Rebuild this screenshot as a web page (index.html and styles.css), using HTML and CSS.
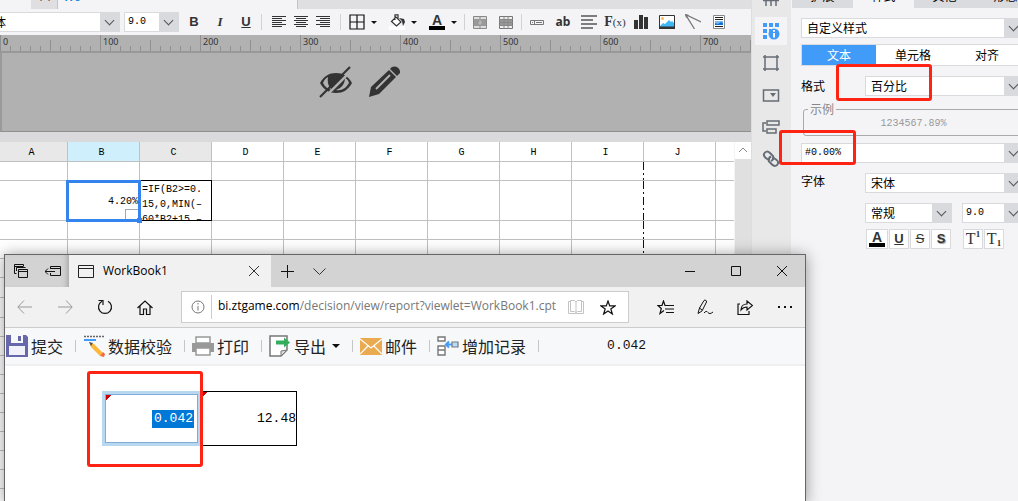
FILE: index.html
```html
<!DOCTYPE html>
<html lang="zh-CN">
<head>
<meta charset="utf-8">
<title>WorkBook1</title>
<link rel="stylesheet" href="styles.css">
</head>
<body>
<div class="app">
  <main class="designer">
    <div class="doc-tabs">
      <div class="doc-tabs-open"><span class="doc-tool">口</span><span class="doc-name">Wo</span></div>
    </div>
    <div class="toolbar">
      <label class="combo combo-font"><select aria-label="字体"><option>宋体</option></select></label>
      <label class="combo combo-size"><select class="mono" aria-label="字号"><option>9.0</option></select></label>
      <div class="group">
        <button class="tb letter bold" aria-label="加粗">B</button>
        <button class="tb letter italic" aria-label="斜体">I</button>
        <button class="tb letter under" aria-label="下划线">U</button>
      </div>
      <i class="sep"></i>
      <div class="group group-align">
        <button class="tb narrow" aria-label="左对齐"><svg width="14" height="12" viewBox="0 0 14 12"><path d="M0 .5h14M0 2.5h10M0 4.5h14M0 6.5h10M0 8.5h14M0 10.5h10" stroke="#333"/></svg></button>
        <button class="tb narrow" aria-label="居中"><svg width="14" height="12" viewBox="0 0 14 12"><path d="M0 .5h14M2 2.5h10M0 4.5h14M2 6.5h10M0 8.5h14M2 10.5h10" stroke="#333"/></svg></button>
        <button class="tb narrow" aria-label="右对齐"><svg width="14" height="12" viewBox="0 0 14 12"><path d="M0 .5h14M4 2.5h10M0 4.5h14M4 6.5h10M0 8.5h14M4 10.5h10" stroke="#333"/></svg></button>
      </div>
      <i class="sep"></i>
      <div class="group group-split">
        <button class="tb split" aria-label="边框"><svg width="16" height="16" viewBox="0 0 16 16"><path d="M1 1h14v14H1zM8 1v14M1 8h14" fill="none" stroke="#111" stroke-width="1.2"/></svg><i class="caret"></i></button>
        <button class="tb split" aria-label="背景"><svg width="16" height="16" viewBox="0 0 16 16"><path d="M0 12h16v4H0z" fill="#fff"/><path d="M2.500 7.500L7 3l5 5-4.500 4zM6 6V.8h3V5" fill="#fff" stroke="#333" stroke-width="1.200"/><path d="M10 4l5 1 1 3-2 4-1-5z" fill="#333"/></svg><i class="caret"></i></button>
        <button class="tb split" aria-label="字体颜色"><span class="color-a">A</span><i class="caret"></i></button>
      </div>
      <i class="sep"></i>
      <div class="group">
        <button class="tb" aria-label="合并"><svg width="14" height="13" viewBox="0 0 14 13"><path d="M.5.500h13v12H.5z" fill="#ddd" stroke="#888"/><path d="M1 3h12v7H1z" fill="#999"/><path d="M7 0v3M7 10v3" stroke="#888"/><path d="M6 5h2v3H6v-1.500h2" fill="none" stroke="#bbb"/></svg></button>
        <button class="tb" aria-label="取消合并"><svg width="14" height="13" viewBox="0 0 14 13"><path d="M.5.500h13v12H.5z" fill="#eee" stroke="#777"/><path d="M1 4h12v5H1z" fill="#999"/><path d="M0 3.500h14M0 6.500h14M0 9.500h14M5 0v13M9 0v13" stroke="#888"/></svg></button>
      </div>
      <i class="sep"></i>
      <div class="group">
        <button class="tb" aria-label="控件"><svg width="14" height="5" viewBox="0 0 14 5"><path d="M.5.500h13v4H.5zM4.500 0v5M6 2.500h6M2 2.500h1" fill="none" stroke="#777"/></svg></button>
        <button class="tb ab" aria-label="文本">ab</button>
        <button class="tb" aria-label="富文本"><svg width="16" height="14" viewBox="0 0 16 14"><path d="M0 1h16M0 5h12M0 9h16M0 13h12" stroke="#555" stroke-width="1.500"/></svg></button>
        <button class="tb fx" aria-label="公式">F<small>(x)</small></button>
        <button class="tb" aria-label="图表"><svg width="14" height="14" viewBox="0 0 14 14"><path d="M0 5h4v9H0zM5 0h4v14H5zM10 2h4v12h-4z" fill="#333"/></svg></button>
        <button class="tb" aria-label="图片"><svg width="16" height="14" viewBox="0 0 16 14"><path d="M.5.500h15v13H.5z" fill="#fff" stroke="#333"/><path d="M1 11l3-3 2 1 4-4 2 2 1-1 2 2v4H1z" fill="#3fb8f5"/><circle cx="3.500" cy="3.500" r="1.500" fill="#fdbb45"/><path d="M0 11.500h16V14H0z" fill="#333"/></svg></button>
        <button class="tb" aria-label="斜线"><svg width="16" height="16" viewBox="0 0 16 16"><path d="M.5.500l9 14.500M.5.500L16 8" stroke="#777" stroke-width="1.300"/><path d="M0 0l4 1-3 3z" fill="#777"/></svg></button>
        <button class="tb" aria-label="子报表"><svg width="12" height="14" viewBox="0 0 12 14"><path d="M.5.500h11v13H.5z" fill="#fff" stroke="#888"/><path d="M2 2.500h8M2 4.500h8M2 11.500h8" stroke="#222"/><path d="M2 6h8v4H2z" fill="#7db8f0"/><path d="M2 8l3 1 3-2 2 1v2H2z" fill="#1273d4"/></svg></button>
      </div>
    </div>
    <div class="ruler"><span>0</span><span>100</span><span>200</span><span>300</span><span>400</span><span>500</span><span>600</span><span>700</span></div>
    <div class="param-pane">
      <svg width="34" height="32" viewBox="0 0 34 32" aria-label="隐藏"><path d="M1 17C5 10 10 7 17 7s12 3 16 10c-4 7-9 10-16 10S5 24 1 17z" fill="#333"/><path d="M4 17c1-3 3-5 5-6-1 6 1 10 4 13-4-1-7-3-9-7zM30 17c-1-3-2-4-4-5 0 5-3 10-9 12 6 1 10-2 13-7z" fill="#b1b1b1"/><path d="M4 33L35 2" stroke="#b1b1b1" stroke-width="2.500"/><path d="M1 31L31 1" stroke="#333" stroke-width="2.200"/></svg>
      <svg width="31" height="31" viewBox="0 0 31 31" aria-label="编辑"><path d="M0 31l2-10L20 4l7 7L10 28z" fill="#333"/><path d="M21 3c3-5 11-2 10 4l-3 3z" fill="#333"/><path d="M7 23L21 9" stroke="#b1b1b1" stroke-width="2"/></svg>
    </div>
    <div class="sheet-wrap">
      <div class="sheet-view">
        <table class="sheet">
          <colgroup><col class="col-a"><col><col><col><col><col><col><col><col><col><col></colgroup>
          <thead><tr><th class="used">A</th><th class="active">B</th><th class="used">C</th><th>D</th><th>E</th><th>F</th><th>G</th><th>H</th><th>I</th><th>J</th><th></th></tr></thead>
          <tbody>
            <tr><td></td><td></td><td></td><td></td><td></td><td></td><td></td><td></td><td class="page-end"></td><td></td><td></td></tr>
            <tr class="tall"><td></td><td class="cell-b2"><div class="picked">4.20%<i class="widget"></i><i class="handle"></i></div></td><td class="cell-c2"><div class="formula">=IF(B2&gt;=0.<br>15,0,MIN(–<br>60*B2+15,–</div></td><td></td><td></td><td></td><td></td><td></td><td class="page-end"></td><td></td><td></td></tr>
            <tr><td></td><td></td><td></td><td></td><td></td><td></td><td></td><td></td><td class="page-end"></td><td></td><td></td></tr>
            <tr><td></td><td></td><td></td><td></td><td></td><td></td><td></td><td></td><td class="page-end"></td><td></td><td></td></tr>
            <tr><td></td><td></td><td></td><td></td><td></td><td></td><td></td><td></td><td></td><td></td><td></td></tr>
            <tr class="mid"><td></td><td></td><td></td><td></td><td></td><td></td><td></td><td></td><td></td><td></td><td></td></tr>
            <tr class="mid"><td></td><td></td><td></td><td></td><td></td><td></td><td></td><td></td><td></td><td></td><td></td></tr>
            <tr><td></td><td></td><td></td><td></td><td></td><td></td><td></td><td></td><td></td><td></td><td></td></tr>
            <tr><td></td><td></td><td></td><td></td><td></td><td></td><td></td><td></td><td></td><td></td><td></td></tr>
            <tr><td></td><td></td><td></td><td></td><td></td><td></td><td></td><td></td><td></td><td></td><td></td></tr>
            <tr><td></td><td></td><td></td><td></td><td></td><td></td><td></td><td></td><td></td><td></td><td></td></tr>
            <tr><td></td><td></td><td></td><td></td><td></td><td></td><td></td><td></td><td></td><td></td><td></td></tr>
            <tr><td></td><td></td><td></td><td></td><td></td><td></td><td></td><td></td><td></td><td></td><td></td></tr>
            <tr><td></td><td></td><td></td><td></td><td></td><td></td><td></td><td></td><td></td><td></td><td></td></tr>
            <tr><td></td><td></td><td></td><td></td><td></td><td></td><td></td><td></td><td></td><td></td><td></td></tr>
            <tr><td></td><td></td><td></td><td></td><td></td><td></td><td></td><td></td><td></td><td></td><td></td></tr>
            <tr><td></td><td></td><td></td><td></td><td></td><td></td><td></td><td></td><td></td><td></td><td></td></tr>
          </tbody>
        </table>
      </div>
      <div class="scroll"><div class="scroll-up"><svg width="10" height="6" viewBox="0 0 10 6"><path d="M1 5l4-4 4 4" fill="none" stroke="#888"/></svg></div></div>
    </div>
  </main>

  <nav class="rail">
    <button aria-label="单元格元素"><svg width="18" height="18" viewBox="0 0 18 18"><path d="M1 10.500h16M4 5v11M9 5v11M14 5v11" stroke="#666c76" stroke-width="1.500"/></svg></button>
    <button class="on" aria-label="单元格属性"><svg width="18" height="18" viewBox="0 0 18 18"><path d="M1 1h4v4H1zM7 1h4v4H7zM13 1h4v4h-4zM1 7h4v4H1zM1 13h4v4H1zM7 7h2v2H7z" fill="#419bf9"/><circle cx="12" cy="12" r="5.500" fill="#419bf9"/><path d="M12 8v1.800M12 11v4.500" stroke="#fff" stroke-width="2"/></svg></button>
    <button aria-label="悬浮元素"><svg width="18" height="18" viewBox="0 0 18 18"><path d="M3 1v16M15 1v16M1 3h16M1 15h16" stroke="#666c76" stroke-width="1.500"/></svg></button>
    <button aria-label="控件设置"><svg width="18" height="18" viewBox="0 0 18 18"><path d="M1.500 4h15v11h-15z" fill="none" stroke="#666c76" stroke-width="1.500"/><path d="M8 7h6l-3 4z" fill="#666c76"/></svg></button>
    <button aria-label="条件属性"><svg width="18" height="18" viewBox="0 0 18 18"><path d="M5 3h12v4H5zM5 11h9v4H5zM4 5H1v8h3" fill="none" stroke="#666c76" stroke-width="1.500"/></svg></button>
    <button aria-label="超级链接"><svg width="18" height="18" viewBox="0 0 18 18"><g fill="none" stroke="#666c76" stroke-width="2"><path d="M8 9.500C5 10 1 6 2 4c1-3 4-3 6-1l3 3c1 2 0 4-2 5"/><path d="M10 8.500c3-1 7 3 6 5-1 3-4 3-6 1l-3-3c-1-2 0-4 2-5"/></g></svg></button>
  </nav>

  <aside class="panel">
    <div class="panel-tabs"><span>扩展</span><span class="on">样式</span><span>其他</span><span>形态</span></div>
    <div class="panel-body">
      <label class="combo bleed"><select aria-label="样式"><option>自定义样式</option></select></label>
      <div class="segments"><button class="on">文本</button><button>单元格</button><button>对齐</button></div>
      <div class="field"><label for="fmt">格式</label><div class="combo bleed"><select id="fmt"><option>百分比</option></select></div></div>
      <fieldset class="sample"><legend>示例</legend><p>1234567.89%</p></fieldset>
      <label class="combo bleed"><select class="mono" aria-label="格式代码"><option>#0.00%</option></select></label>
      <div class="field field-font"><label for="font">字体</label><div class="combo bleed"><select id="font"><option>宋体</option></select></div></div>
      <div class="pair"><label class="combo"><select aria-label="字形"><option>常规</option></select></label><label class="combo bleed"><select class="mono" aria-label="字号"><option>9.0</option></select></label></div>
      <div class="marks">
        <button class="wide" aria-label="颜色"><span class="color-a">A</span></button><button class="u">U</button><button class="s">S</button><button class="sh">S</button>
        <button class="t first">T<sup>1</sup></button><button class="t">T<sub>1</sub></button>
      </div>
    </div>
  </aside>
</div>

<section class="browser">
  <div class="titlebar">
    <div class="tab-tools">
      <svg width="14" height="14" viewBox="0 0 14 14"><path d="M2.500 9.500h-2v-9h9v2M0 2.500h9M2.500 7V3.500h9M4.500 5.500h9v8h-9zM4 7.500h10" fill="none" stroke="#111"/></svg>
      <svg width="16" height="12" viewBox="0 0 16 12"><path d="M5.500 4V1.500h10v9h-10V8M5 3.500h11M0 6.500h10M3 3.500l-3 3 3 3" fill="none" stroke="#111"/></svg>
    </div>
    <div class="tab"><svg width="16" height="13" viewBox="0 0 16 13"><path d="M.5.500h15v12H.5zM0 3.500h16" fill="none" stroke="#222"/></svg><span>WorkBook1</span><button aria-label="关闭标签"><svg width="10" height="10" viewBox="0 0 10 10"><path d="M0 0l10 10M10 0L0 10" stroke="#333"/></svg></button></div>
    <button class="new-tab" aria-label="新建标签"><svg width="13" height="13" viewBox="0 0 13 13"><path d="M6.500 0v13M0 6.500h13" stroke="#111"/></svg></button>
    <button class="tab-list" aria-label="标签列表"><svg width="13" height="7" viewBox="0 0 13 7"><path d="M.5.500l6 6 6-6" fill="none" stroke="#333"/></svg></button>
    <div class="win-buttons">
      <button aria-label="最小化"><svg width="10" height="10" viewBox="0 0 10 10"><path d="M0 5.500h10" stroke="#111"/></svg></button>
      <button aria-label="最大化"><svg width="10" height="10" viewBox="0 0 10 10"><path d="M.5.500h9v9h-9z" fill="none" stroke="#111"/></svg></button>
      <button aria-label="关闭"><svg width="10" height="10" viewBox="0 0 10 10"><path d="M0 0l10 10M10 0L0 10" stroke="#111"/></svg></button>
    </div>
  </div>
  <div class="navbar">
    <button class="nav" aria-label="后退"><svg width="16" height="14" viewBox="0 0 16 14"><path d="M7 .5L.8 7 7 13.500M1 7h14" fill="none" stroke="#999"/></svg></button>
    <button class="nav" aria-label="前进"><svg width="16" height="14" viewBox="0 0 16 14"><path d="M9 .5L15.200 7 9 13.500M15 7H1" fill="none" stroke="#999"/></svg></button>
    <button class="nav" aria-label="刷新"><svg width="16" height="16" viewBox="0 0 16 16"><path d="M5 2.200a6.500 6.500 0 1 0 6 0M1.500 1.500H6V6" fill="none" stroke="#111" stroke-width="1.200"/></svg></button>
    <button class="nav" aria-label="主页"><svg width="16" height="15" viewBox="0 0 16 15"><path d="M.5 8L8 1l7.500 7M3 6v8.500h3.500V9h3v5.500H13V6" fill="none" stroke="#111" stroke-width="1.200"/></svg></button>
    <div class="address">
      <svg class="info" width="14" height="14" viewBox="0 0 14 14"><circle cx="7" cy="7" r="6" fill="none" stroke="#777"/><path d="M7 3v1.500M7 6v4.500" stroke="#777"/></svg>
      <div class="url"><b>bi.ztgame.com</b>/decision/view/report?viewlet=WorkBook1.cpt</div>
      <svg width="16" height="14" viewBox="0 0 16 14"><path d="M2.500 1.500h-2v12h15v-12h-2M2.500.500h4L8 2l1.500-1.500h4v11h-4L8 12.500l-1.500-1h-4zM8 2v11" fill="none" stroke="#c4c4c4"/></svg>
      <svg class="star" width="16" height="15" viewBox="0 0 16 15"><path d="M8 1l1.700 4.900H15l-4.200 3.100 1.600 5L8 11l-4.400 3 1.600-5L1 5.900h5.300z" fill="none" stroke="#111" stroke-width="1.200"/></svg>
    </div>
    <div class="nav-right">
      <button class="nav" aria-label="收藏夹"><svg width="17" height="15" viewBox="0 0 17 15"><path d="M10 5.500H8L6.500 1 5 5.500H1l3.300 3-1.300 5 4-3M9 5.500h8M8 9h9M9 12.500h8" fill="none" stroke="#111" stroke-width="1.200"/></svg></button>
      <button class="nav" aria-label="笔记"><svg width="16" height="16" viewBox="0 0 16 16"><path d="M1 14.500L2.500 9 7 1.500c1-1 3 0 2.500 1.500L5 12l-4 2.500zM2.500 9L5 11M7 14c1.500-2 3-2 4-.5s2.500 1.500 5-.5" fill="none" stroke="#111"/></svg></button>
      <button class="nav" aria-label="分享"><svg width="16" height="15" viewBox="0 0 16 15"><path d="M3 4H1v10.500h11V11M4 10c0-4 3-6 6-6V1l5.500 4.500L10 10V7c-3 0-4.500 1-6 3z" fill="none" stroke="#111" stroke-width="1.200"/></svg></button>
      <button class="nav" aria-label="更多"><svg width="16" height="4" viewBox="0 0 16 4"><path d="M1 1h2v2H1zM7 1h2v2H7zM13 1h2v2h-2z" fill="#111"/></svg></button>
    </div>
  </div>
  <div class="report-bar">
    <button><svg width="22" height="22" viewBox="0 0 22 22"><path d="M0 0h20l2 2v20H0z" fill="#6767ab"/><path d="M5 0h12v8H5z" fill="#f6f8fa"/><path d="M12 1h3v5h-3z" fill="#6767ab"/><path d="M3 11h16v9H3z" fill="#f1f1fa"/></svg>提交</button><i class="bar-sep"></i>
    <button><svg width="22" height="22" viewBox="0 0 22 22"><path d="M1 1.500h20" stroke="#666" stroke-width="1.500" stroke-dasharray="2 1"/><path d="M1 5h12" stroke="#419bf9" stroke-width="2"/><path d="M6 7l5 2 9 9-3 3-9-9z" fill="#fbb93b"/><path d="M6 7l4 1-2 3z" fill="#555"/><path d="M17 21l3-4 2 2-1 3z" fill="#ef6a42"/></svg>数据校验</button><i class="bar-sep"></i>
    <button><svg width="22" height="20" viewBox="0 0 22 20"><path d="M4 1h14v6H4z" fill="#fff" stroke="#999" stroke-width="1.500"/><path d="M0 7h22v9H0z" fill="#999"/><path d="M4 12h14v7H4z" fill="#fff" stroke="#999" stroke-width="1.500"/></svg>打印</button><i class="bar-sep"></i>
    <button><svg width="22" height="22" viewBox="0 0 22 22"><path d="M1 1h17v14l-6 6H1z" fill="#fff" stroke="#777" stroke-width="1.500"/><path d="M12 21v-5l6-1z" fill="#ddd" stroke="#777"/><path d="M7 5.500h8V2.500l6 5-6 5v-3H7z" fill="#34ad5c"/></svg>导出<i class="caret"></i></button><i class="bar-sep"></i>
    <button><svg width="22" height="17" viewBox="0 0 22 17"><path d="M0 0h22v17H0z" fill="#e9aa50"/><path d="M0 1l11 9L22 1M0 16l8-8M22 16l-8-8" fill="none" stroke="#fff" stroke-width="1.200"/></svg>邮件</button><i class="bar-sep"></i>
    <button><svg width="22" height="20" viewBox="0 0 22 20"><path d="M1 1h7v4H1zM1 10h7v4H1zM1 14h7v5H1z" fill="#fff" stroke="#777" stroke-width="1.400"/><path d="M15 6h6v5h-6z" fill="#b9dcfa" stroke="#777" stroke-width="1.200"/><path d="M15 8.500h-5M12 5.500l-3 3 3 3" fill="none" stroke="#419bf9" stroke-width="2"/></svg>增加记录</button><i class="bar-sep"></i>
    <output>0.042</output>
  </div>
  <div class="report">
    <table class="result"><tr><td class="editing"><input value="0.042" aria-label="数值"></td><td class="value">12.48</td></tr></table>
  </div>
  <i class="mark mark-result"></i>
</section>
<i class="mark mark-format"></i>
<i class="mark mark-code"></i>
</body>
</html>
```
FILE: styles.css
```css
* { box-sizing: border-box; }
body { margin: 0; height: 100vh; overflow: hidden; position: relative; font: 12px/16px "Liberation Sans", "Noto Sans CJK SC", sans-serif; color: #000; }
button { padding: 0; border: 0; background: none; font: inherit; color: inherit; display: flex; align-items: center; justify-content: center; }
svg { flex: none; display: block; }
.mono { font-family: "Liberation Mono", "Noto Sans CJK SC", monospace; font-size: 10px; }

.app { display: flex; height: 100%; }
.designer { flex: 1; min-width: 0; display: flex; flex-direction: column; overflow: hidden; background: #dadadc; }

.doc-tabs { flex: none; height: 9px; overflow: hidden; background: #dfdfe1; }
.doc-tabs-open { display: flex; width: 298px; height: 9px; padding-left: 31px; background: #f4f4f7; border-right: 1px solid #c4c4c8; }
.doc-tool { width: 27px; padding-left: 8px; background: #dfdfe1; border-right: 1px solid #c4c4c8; line-height: 16px; margin-top: -12px; padding-bottom: 8px; height: 21px; }
.doc-name { color: #1683d8; padding-left: 5px; margin-top: -11px; }

.toolbar { flex: none; display: flex; align-items: center; height: 26px; background: #f4f4f7; overflow: hidden; }
.combo { display: grid; align-items: center; height: 20px; min-width: 0; }
.combo select { grid-area: 1 / 1; appearance: none; width: 100%; height: 20px; margin: 0; padding: 0 20px 0 5px; border: 1px solid #d9dadd; border-radius: 0; background: linear-gradient(#d9dadd, #d9dadd) right / 19px 100% no-repeat #fff; color: #000; font-size: 12px; line-height: 16px; font-family: "Noto Sans CJK SC", sans-serif; }
.combo select.mono { font: 10px/16px "Liberation Mono", monospace; padding-left: 3px; }
.combo::after { content: ""; grid-area: 1 / 1; justify-self: end; width: 6px; height: 6px; margin: 0 7px 4px 0; border: solid #555; border-width: 0 1px 1px 0; transform: rotate(45deg); pointer-events: none; }
.combo-font { flex: none; width: 144px; margin-left: -24px; }
.combo-size { flex: none; width: 55px; margin-left: 4px; }
.group { display: flex; margin: 0 2px; }
.sep { flex: none; width: 1px; height: 16px; background: #d2d2d6; }
.tb { width: 26px; height: 24px; color: #333; }
.group-align { margin: 0 6px; }
.group-split { margin: 0 1px 0 2px; }
.narrow { width: 22px; }
.split { width: 40px; gap: 6px; }
.caret { border: 3px solid transparent; border-top: 3px solid #111; border-bottom: 0; }
.letter { font-size: 13px; font-weight: bold; }
.italic { font-style: italic; font-family: "Liberation Serif", serif; }
.under { text-decoration: underline; }
.color-a { width: 16px; border-bottom: 4px solid #000; color: #333; font: bold 14px/12px "Liberation Sans", sans-serif; text-align: center; }
.ab { font: bold 12px/16px "Noto Sans", sans-serif; }
.fx { font: 14px/16px "Liberation Serif", serif; font-weight: bold; }
.fx small { font-size: 11px; font-weight: normal; }

.ruler { flex: none; height: 18px; display: flex; overflow: hidden; border-bottom: 2px solid #989898; background: repeating-linear-gradient(90deg, #909090 0 1px, transparent 1px 100px), repeating-linear-gradient(90deg, #909090 0 1px, transparent 1px 50px) 0 100% / 100% 11px no-repeat, repeating-linear-gradient(90deg, #909090 0 1px, transparent 1px 10px) 0 100% / 100% 5px no-repeat, #b1b1b1; font: 9px/13px "Noto Sans", sans-serif; color: #333; }
.ruler span { flex: none; width: 100px; padding-left: 3px; }
.param-pane { flex: none; height: 79px; display: flex; gap: 16px; padding: 13px 0 0 317px; background: #b1b1b1; border-bottom: 1px solid #8f8f8f; border-left: 2px solid #9a9a9a; }

.sheet-wrap { flex: 1; min-height: 0; display: flex; margin-top: 10px; background: #f4f4f4; }
.sheet-view { flex: 1; min-width: 0; overflow: hidden; background: #fff; }
.sheet { table-layout: fixed; width: 788px; border-spacing: 0; font: 10px/14px "Liberation Mono", monospace; }
.sheet col { width: 72px; }
.sheet .col-a { width: 68px; }
.sheet th, .sheet td { padding: 0; border: solid #c0c0c0; border-width: 0 1px 1px 0; }
.sheet th { height: 20px; padding: 3px 4px 0 0; font-weight: normal; background: #fff; }
.sheet th.used { background: #e8e8e8; }
.sheet th.active { background: #d0effc; }
.sheet td { height: 19px; }
.sheet .tall td { height: 40px; }
.sheet .mid td { height: 20px; }
.sheet td.page-end { border-right: 0; background: repeating-linear-gradient(#111 0 8px, transparent 8px 11px, #111 11px 13px, transparent 13px 16px) right / 1px 100% no-repeat; }
.picked { position: relative; height: 42px; margin: -2px; border: 3px solid #3584ee; text-align: right; line-height: 37px; }
.widget { position: absolute; right: 0; bottom: 0; width: 13px; height: 10px; border: 1px solid #9ab; border-right: 0; border-bottom: 0; background: #fff; }
.handle { position: absolute; right: -4px; bottom: -4px; width: 5px; height: 5px; background: #3584ee; }
.formula { height: 41px; margin: -1px -1px -1px 0; padding: 1px 0 0 2px; overflow: hidden; border: 1px solid #000; border-left: 0; line-height: 15px; white-space: nowrap; }
.scroll { flex: none; width: 17px; padding-left: 1px; background: #f4f4f4; }
.scroll-up { height: 100%; border-top: 17px solid #fff; background: #e0e0e0; display: flex; justify-content: center; }
.scroll-up svg { margin-top: -12px; }

.rail { flex: none; width: 40px; overflow: hidden; background: #e8e8e9; border-left: 1px solid #ddd; }
.rail button { width: 32px; height: 28px; margin: 0 auto 4px 3px; }
.rail button:first-child { margin-top: -15px; }
.rail .on { background: #f4f4f7; }
.panel { flex: none; width: 227px; overflow: hidden; background: #f4f4f7; font-family: "Noto Sans CJK SC", sans-serif; }
.panel-tabs { display: flex; height: 8px; overflow: hidden; margin-left: 1px; }
.panel-tabs span { flex: none; width: 61px; height: 20px; margin-top: -12px; text-align: center; background: #dadbde; }
.panel-tabs .on { background: #f4f4f7; }
.panel-body { padding: 10px 0 0 10px; }
.bleed { margin-right: -6px; }
.segments { display: flex; height: 22px; margin: 6px 0 10px; border: 1px solid #d9dadd; border-right: 0; background: #fff; }
.segments button { flex: 1 0 74px; }
.segments .on { background: #419bf9; color: #fff; }
.field { display: grid; grid-template-columns: 64px 1fr; align-items: center; }
.sample { height: 34px; margin: 6px -6px 7px 2px; padding: 0; border: 1px solid #aaa; border-radius: 3px; color: #999; font: 10px/16px "Liberation Mono", monospace; }
.sample legend { margin-left: 4px; padding: 0 2px; font: 12px/14px "Noto Sans CJK SC", sans-serif; color: #888; }
.sample p { margin: 0; text-align: center; }
.field-font { margin-top: 10px; height: 20px; }
.field-font label { margin-bottom: 4px; }
.pair { display: grid; grid-template-columns: 87px 1fr; gap: 10px; margin: 10px 0 6px 64px; }
.marks { display: flex; gap: 1px; margin-left: 65px; }
.marks button { width: 20px; height: 20px; border: 1px solid #d9dadd; background: #fff; font: bold 13px/16px "Liberation Sans", sans-serif; color: #333; }
.marks .wide { width: 22px; }
.marks .u { text-decoration: underline; }
.marks .s { text-decoration: line-through; font-weight: normal; }
.marks .sh { text-shadow: 1px 1px 1px #999; }
.marks .t { font: 16px/16px "Liberation Serif", serif; }
.marks .first { margin-left: 11px; }
.marks sup, .marks sub { font-size: 9px; line-height: 9px; font-weight: bold; }
.marks sup { align-self: flex-start; }
.marks sub { align-self: flex-end; }

.browser { position: absolute; left: 4px; right: 212px; top: 254px; bottom: -2px; background: #fff; border: 1px solid #666; box-shadow: 0 1px 14px rgba(0, 0, 0, .4); display: flex; flex-direction: column; font-family: "Open Sans", sans-serif; }
.titlebar { flex: none; height: 32px; display: flex; background: #d3d3d3; }
.tab-tools { flex: none; width: 64px; display: flex; align-items: center; gap: 17px; padding-left: 9px; box-shadow: inset -6px 0 6px -5px #999; }
.tab { flex: none; width: 202px; display: flex; align-items: center; gap: 9px; padding: 0 12px 0 9px; background: #f1f1f1; }
.tab span { flex: 1; }
.new-tab { width: 32px; }
.tab-list { width: 32px; }
.win-buttons { display: flex; margin-left: auto; }
.win-buttons button { width: 46px; }
.navbar { flex: none; height: 41px; display: flex; align-items: center; background: #f1f1f1; border-bottom: 1px solid #ccc; }
.nav { flex: none; width: 40px; height: 40px; }
.address { flex: 0 1 448px; min-width: 0; height: 32px; display: flex; align-items: center; margin-left: 16px; padding: 0 12px 0 9px; border: 1px solid #ccc; background: #fff; }
.info { margin-right: 6px; }
.url { flex: 1; min-width: 0; height: 24px; padding-left: 6px; margin-right: 12px; border-left: 1px solid #ccc; line-height: 21px; overflow: hidden; white-space: nowrap; color: #777; }
.url b { font-weight: normal; color: #000; }
.star { margin-left: 16px; }
.nav-right { display: flex; margin-left: auto; }

.report-bar { flex: none; height: 38px; display: flex; align-items: center; padding-left: 1px; background: #f6f8fa; border-bottom: 2px solid #eeeff1; font: 16px/24px "Noto Sans CJK SC", sans-serif; color: #222; }
.report-bar button { flex: none; gap: 3px; }
.report-bar .caret { margin-left: 3px; border-width: 4px; border-bottom-width: 0; }
.bar-sep { flex: none; width: 1px; height: 12px; margin: 0 7px 0 12px; background: #c4c6c8; }
.report-bar output { margin-left: 61px; font: 13px/16px "Liberation Mono", monospace; color: #111; }
.report { flex: 1; padding: 25px 0 0 97px; }
.result { border-spacing: 0; font: 13px/18px "Liberation Mono", monospace; }
.result td { height: 55px; padding: 0; text-align: right; }
.result .editing { width: 99px; padding-right: 4px; border: 3px solid #b8d8f0; outline: 1px solid #82abdc; outline-offset: -4px; background: linear-gradient(135deg, #c00 0 5px, transparent 5px) no-repeat; }
.editing input { width: 42px; height: 18px; padding: 0 1px; border: 0; background: #0078d7; color: #fff; font: inherit; text-align: right; }
.result .value { width: 96px; border: 1px solid #000; background: linear-gradient(135deg, #c00 0 4px, transparent 4px) no-repeat; }

.mark { position: absolute; border: 3px solid #ff2314; border-radius: 3px; pointer-events: none; }
.mark-result { left: 82px; top: 116px; width: 116px; height: 96px; }
.mark-format { right: 86px; top: 64px; width: 96px; height: 37px; }
.mark-code { right: 162px; top: 130px; width: 77px; height: 35px; }
```
